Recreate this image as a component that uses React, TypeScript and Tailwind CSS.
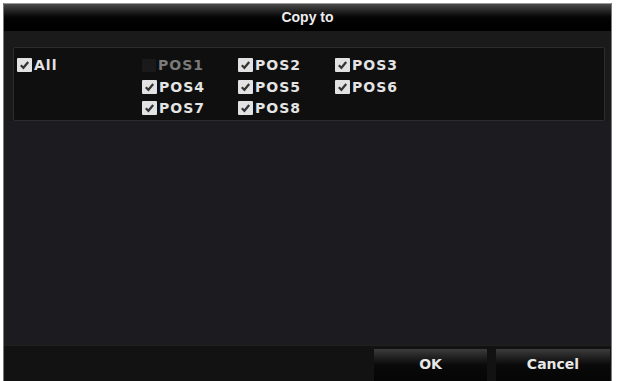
import React from 'react';

type Item = { label: string; checked: boolean; disabled?: boolean };

const items: Item[] = [
  { label: 'POS1', checked: false, disabled: true },
  { label: 'POS2', checked: true },
  { label: 'POS3', checked: true },
  { label: 'POS4', checked: true },
  { label: 'POS5', checked: true },
  { label: 'POS6', checked: true },
  { label: 'POS7', checked: true },
  { label: 'POS8', checked: true },
];

function CheckBox({ checked, disabled }: { checked: boolean; disabled?: boolean }) {
  if (disabled) {
    return <span className="block w-[14px] h-[13px] bg-[#1a1a1a] rounded-[1px]" />;
  }
  return (
    <span className="flex items-center justify-center w-[15px] h-[14px] bg-[#e2e2e2] rounded-[1px]">
      {checked && (
        <svg width="11" height="10" viewBox="0 0 11 10">
          <path d="M1.8 5.2 L4.4 7.8 L9.2 2" fill="none" stroke="#333" strokeWidth="2.2" />
        </svg>
      )}
    </span>
  );
}

function CheckItem({ label, checked, disabled }: Item) {
  return (
    <div className="flex items-center h-[20px] gap-[2px]">
      <CheckBox checked={checked} disabled={disabled} />
      <span
        className={`text-[14px] font-bold tracking-[1px] leading-none ${
          disabled ? 'text-[#7a7a7a]' : 'text-[#e4e4e4]'
        }`}
      >
        {label}
      </span>
    </div>
  );
}

export default function App() {
  return (
    <div className="w-[618px] h-[381px] bg-white pt-[3px] pl-[3px] pr-[6px] overflow-hidden font-['DejaVu_Sans',sans-serif]">
      <div className="flex flex-col h-full border-l border-r border-[#7a7a7a] bg-[#1b1b1d]">
        <div className="h-[28px] flex items-center justify-center bg-gradient-to-b from-[#4a4a4a] via-[#050505] to-[#000] border-t border-[#9a9a9a]">
          <span className="text-[14px] font-bold text-[#ededed] font-['Liberation_Sans',sans-serif]">
            Copy to
          </span>
        </div>
        <div className="pt-[16px] pl-[9px] pr-[6px] bg-[#1a1a1a]">
          <div className="flex h-[74px] pt-[7px] pl-[3px] bg-[#0f0f0f] border border-[#2c2c2c] rounded-[2px]">
            <div className="w-[125px]">
              <CheckItem label="All" checked />
            </div>
            <div className="grid grid-cols-[96px_97px_96px]">
              {items.map((it) => (
                <CheckItem key={it.label} {...it} />
              ))}
            </div>
          </div>
        </div>
        <div className="flex-1 bg-[#1c1c20]" />
        <div className="h-[36px] flex justify-end items-end gap-[9px] pr-[1px] bg-[#121212] border-t border-[#202020]">
          <button className="w-[113px] h-[32px] pb-[1px] bg-gradient-to-b from-[#3c3c3c] via-[#0a0a0a] to-[#050505] text-[14px] font-bold text-[#e8e8e8]">
            OK
          </button>
          <button className="w-[114px] h-[32px] pb-[1px] bg-gradient-to-b from-[#3c3c3c] via-[#0a0a0a] to-[#050505] text-[14px] font-bold text-[#e8e8e8]">
            Cancel
          </button>
        </div>
      </div>
    </div>
  );
}
